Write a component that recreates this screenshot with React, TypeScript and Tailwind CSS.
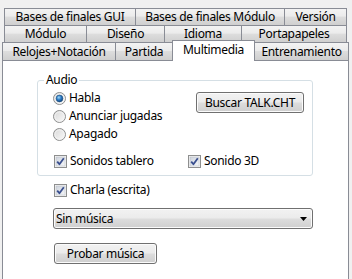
import React from "react";

const font = { fontFamily: '"Segoe UI", "Noto Sans", "Open Sans", sans-serif' };

const tabBg =
  "bg-[linear-gradient(#f3f3f3_0%,#ebebeb_45%,#dddddd_50%,#cfcfcf_100%)]";
const btnBg =
  "bg-[linear-gradient(#f2f2f2_0%,#ebebeb_48%,#dddddd_52%,#cfcfcf_100%)]";

function Tab({ label, w, first, selected }: { label: string; w: string; first?: boolean; selected?: boolean }) {
  if (selected) {
    return (
      <div
        className={`${w} ${first ? "" : "-ml-px"} relative z-10 h-[21px] -mb-px flex items-start justify-center border border-b-0 border-[#898c95] bg-white pt-[1px] text-[12px] leading-[16px] text-black`}
      >
        {label}
      </div>
    );
  }
  return (
    <div
      className={`${w} ${first ? "" : "-ml-px"} flex h-full items-center justify-center border border-b-0 border-[#898c95] ${tabBg} text-[12px] leading-[16px] text-black`}
    >
      {label}
    </div>
  );
}

function Radio({ checked }: { checked?: boolean }) {
  return (
    <svg width="13" height="13" viewBox="0 0 13 13" className="shrink-0">
      <defs>
        <linearGradient id="rg" x1="0" y1="0" x2="1" y2="1">
          <stop offset="0" stopColor="#d6d6d6" />
          <stop offset="1" stopColor="#fbfbfb" />
        </linearGradient>
        <radialGradient id="rd" cx="0.4" cy="0.35" r="0.7">
          <stop offset="0" stopColor="#9fd8f7" />
          <stop offset="0.5" stopColor="#2a79c4" />
          <stop offset="1" stopColor="#0f3e73" />
        </radialGradient>
      </defs>
      <circle cx="6.5" cy="6.5" r="6" fill="url(#rg)" stroke="#8e8f8f" strokeWidth="1" />
      <circle cx="6.5" cy="6.5" r="4.6" fill="none" stroke="#f4f4f4" strokeWidth="0.8" />
      {checked && <circle cx="6.5" cy="6.5" r="3.4" fill="url(#rd)" stroke="#1e4f80" strokeWidth="0.6" />}
    </svg>
  );
}

function Check({ checked }: { checked?: boolean }) {
  return (
    <svg width="13" height="13" viewBox="0 0 13 13" className="shrink-0">
      <defs>
        <linearGradient id="cg" x1="0" y1="0" x2="1" y2="1">
          <stop offset="0" stopColor="#cdd3dc" />
          <stop offset="1" stopColor="#f6f7f9" />
        </linearGradient>
      </defs>
      <rect x="0.5" y="0.5" width="12" height="12" fill="#f4f4f4" stroke="#8e8f8f" />
      <rect x="2" y="2" width="9" height="9" fill="url(#cg)" stroke="#b7bcc4" strokeWidth="0.5" />
      {checked && (
        <path d="M3.2 6.6 L5.4 9.2 L9.8 3.2" fill="none" stroke="#3a4f8f" strokeWidth="1.8" strokeLinejoin="round" />
      )}
    </svg>
  );
}

function Button({ label, w }: { label: string; w: string }) {
  return (
    <div
      className={`${w} flex h-[21px] items-center justify-center rounded-[3px] border border-[#707070] ${btnBg} text-[12px] leading-[16px] text-black shadow-[inset_0_0_0_1px_#fbfbfb]`}
    >
      {label}
    </div>
  );
}

export default function App() {
  return (
    <div style={font} className="relative h-[279px] w-[352px] overflow-hidden bg-[#f0f0f0] tracking-[-0.3px] text-black">
      {/* tab strip */}
      <div className="pt-[8px]">
        <div className="ml-[4px] flex h-[17px]">
          <Tab first w="w-[132px]" label="Bases de finales GUI" />
          <Tab w="w-[150px]" label="Bases de finales Módulo" />
          <Tab w="w-[63px]" label="Versión" />
        </div>
        <div className="ml-[4px] flex h-[17px]">
          <Tab first w="w-[83px]" label="Módulo" />
          <Tab w="w-[79px]" label="Diseño" />
          <Tab w="w-[78px]" label="Idioma" />
          <Tab w="w-[106px]" label="Portapapeles" />
        </div>
        <div className="ml-[2px] flex h-[18px] items-end">
          <div className="flex h-[18px]">
            <Tab first w="w-[114px]" label="Relojes+Notación" />
            <Tab w="w-[58px]" label="Partida" />
          </div>
          <Tab selected w="w-[83px]" label="Multimedia" />
          <div className="flex h-[18px]">
            <Tab w="w-[95px]" label="Entrenamiento" />
          </div>
        </div>
      </div>

      {/* page body */}
      <div className="ml-[2px] h-[240px] w-[347px] border border-[#898c95] bg-white pl-[34px] pt-[19px] text-[12px] leading-[16px]">
        <div className="relative h-[96px] w-[276px] rounded-[3px] border border-[#d5dfe5] pl-[15px] pr-[8px] pt-[8px]">
          <span className="absolute -top-[9px] left-[6px] bg-white px-[2px]">Audio</span>
          <div className="flex justify-between">
            <div className="flex flex-col">
              <label className="flex h-[18px] items-center gap-[3px]">
                <Radio checked />
                <span>Habla</span>
              </label>
              <label className="flex h-[18px] items-center gap-[3px]">
                <Radio />
                <span>Anunciar jugadas</span>
              </label>
              <label className="flex h-[18px] items-center gap-[3px]">
                <Radio />
                <span>Apagado</span>
              </label>
            </div>
            <div className="mt-[3px]">
              <Button w="w-[108px]" label="Buscar TALK.CHT" />
            </div>
          </div>
          <div className="mt-[9px] flex h-[18px] items-center">
            <label className="flex w-[135px] items-center gap-[3px] pl-px">
              <Check checked />
              <span>Sonidos tablero</span>
            </label>
            <label className="flex items-center gap-[3px]">
              <Check checked />
              <span>Sonido 3D</span>
            </label>
          </div>
        </div>

        <label className="ml-[17px] mt-[5px] flex h-[18px] items-center gap-[3px]">
          <Check checked />
          <span>Charla (escrita)</span>
        </label>

        <div
          className={`ml-[16px] mt-[9px] flex h-[21px] w-[260px] items-center justify-between rounded-[3px] border border-[#707070] ${btnBg} pl-[2px] pr-[5px] shadow-[inset_0_0_0_1px_#fbfbfb]`}
        >
          <span>Sin música</span>
          <svg width="7" height="4" viewBox="0 0 7 4">
            <path d="M0 0 L7 0 L3.5 4 Z" fill="#000" />
          </svg>
        </div>

        <div className="ml-[17px] mt-[14px]">
          <Button w="w-[103px]" label="Probar música" />
        </div>
      </div>
    </div>
  );
}
